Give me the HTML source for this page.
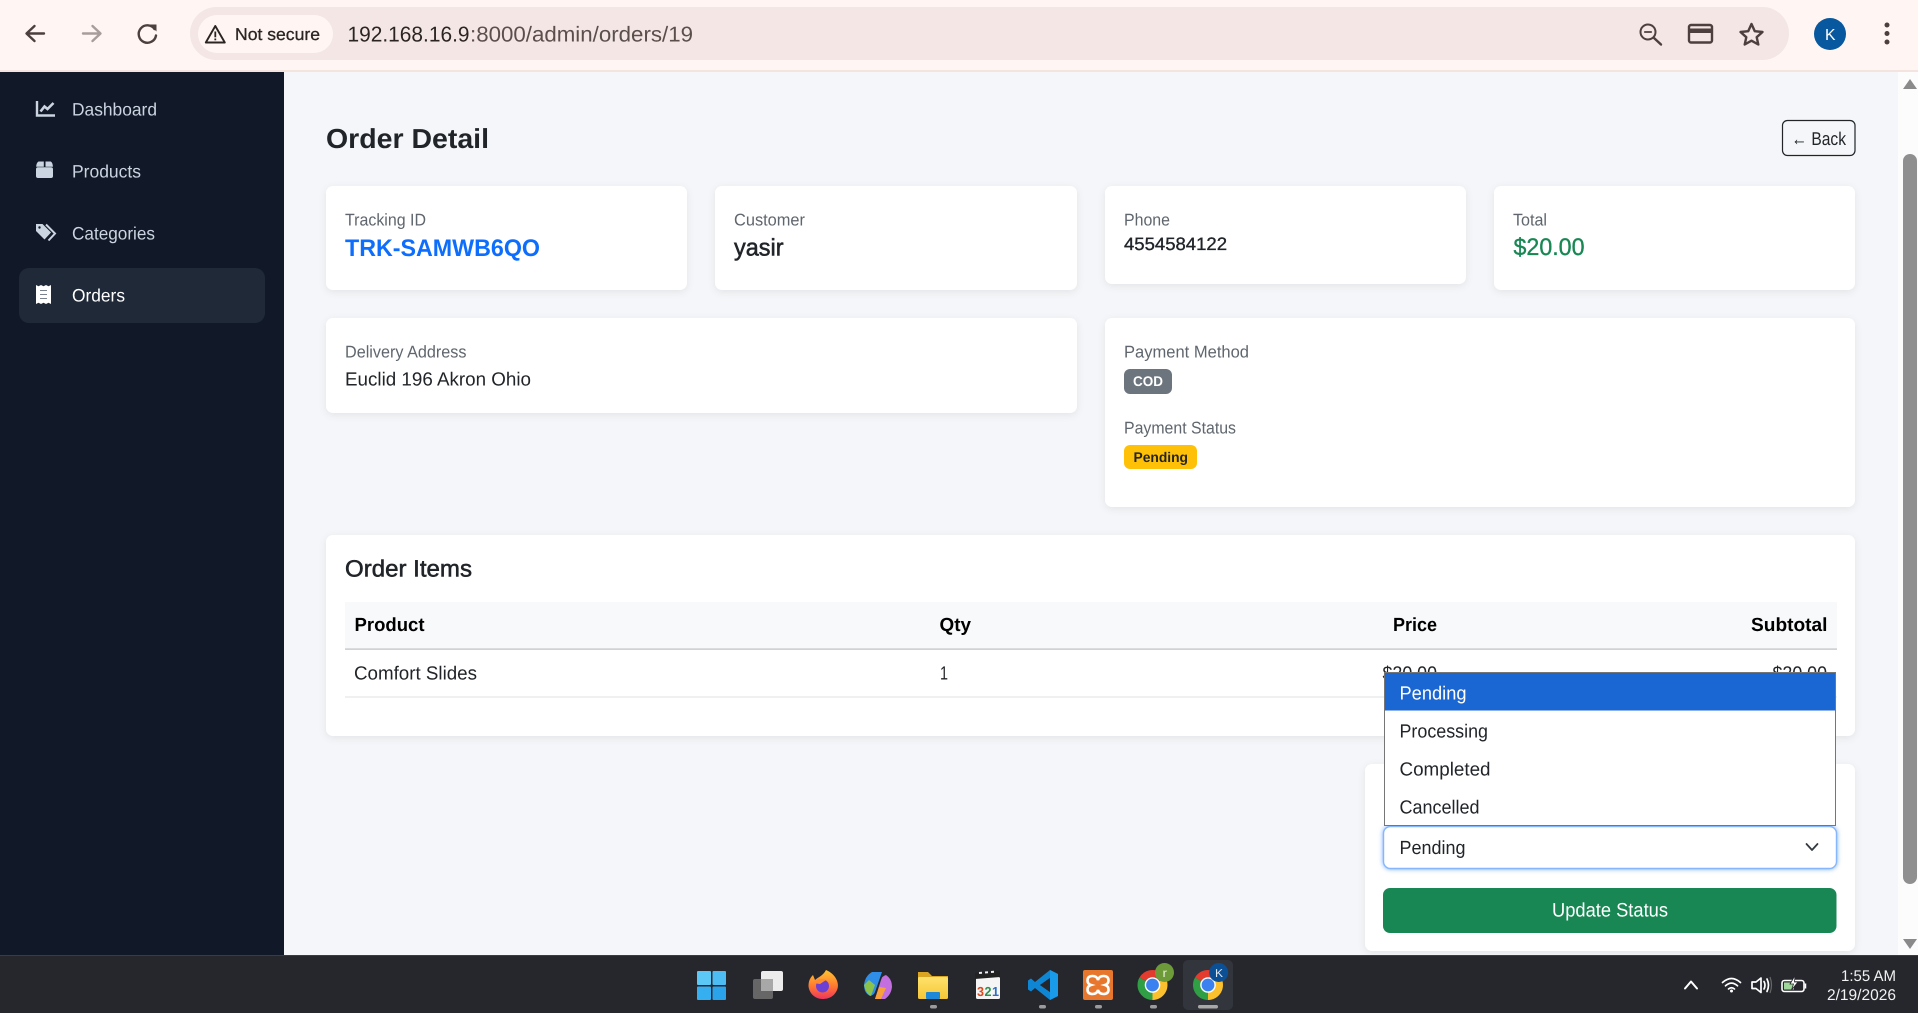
<!DOCTYPE html>
<html lang="en">
<head>
<meta charset="utf-8">
<title>Order Detail</title>
<style>
html,body{margin:0;padding:0;width:1918px;height:1013px;overflow:hidden;background:#f4f6f9}
svg{display:block;position:absolute;left:0;top:0}
text{font-family:"Liberation Sans",Arial,sans-serif;fill:#212529;text-rendering:geometricPrecision}
.lb{font-size:17px;fill:#5f666d}
.m{stroke:currentColor;stroke-width:.55px}
.b{font-weight:700}
.card{fill:#fff;filter:drop-shadow(0 2px 4px rgba(0,0,0,.07))}
.nav{font-size:18px;fill:#cbd5e1}
.opt{font-size:19px;fill:#212529}
.ic{fill:none;stroke:#4c3f3d;stroke-width:2.4;stroke-linecap:round;stroke-linejoin:round}
.tray{fill:none;stroke:#fff;stroke-width:1.7;stroke-linecap:round;stroke-linejoin:round}
</style>
</head>
<body>
<svg width="1918" height="1013" viewBox="0 0 1918 1013" xmlns="http://www.w3.org/2000/svg">
<defs>
  <g id="chrome">
    <path d="M0 0L-13 -7.5A15 15 0 0 1 13 -7.5Z" fill="#e33b2e"/>
    <path d="M0 0L13 -7.5A15 15 0 0 1 0 15Z" fill="#fbc02d"/>
    <path d="M0 0L0 15A15 15 0 0 1 -13 -7.5Z" fill="#2f9e44"/>
    <circle r="7.8" fill="#fff"/><circle r="6.4" fill="#3b82f0"/>
  </g>
  <linearGradient id="ff" x1="0" y1="0" x2="0" y2="1"><stop offset="0" stop-color="#ffc531"/><stop offset=".55" stop-color="#ff7a2f"/><stop offset="1" stop-color="#f0355f"/></linearGradient>
  <linearGradient id="fold" x1="0" y1="0" x2="0" y2="1"><stop offset="0" stop-color="#ffe26b"/><stop offset="1" stop-color="#f6c636"/></linearGradient>
</defs>

<!-- page background -->
<rect x="284" y="72" width="1614" height="883" fill="#f4f6f9"/>

<!-- browser toolbar -->
<rect width="1918" height="70" fill="#fff5f2"/>
<rect y="70" width="1918" height="2" fill="#f4e3df"/>
<path class="ic" d="M44 33.500H27M34.500 26L26.500 33.500L34.500 41"/>
<path class="ic" style="stroke:#a89d9a" d="M83 33.500H100M92.500 26L100.500 33.500L92.500 41"/>
<path class="ic" d="M154.500 29A8.700 8.700 0 1 0 156 35.500"/>
<path d="M149.500 24.500H156.500V31.500Z" fill="#4c3f3d"/>
<rect x="190" y="7" width="1599" height="53" rx="26.500" fill="#f3e6e4"/>
<rect x="198" y="15" width="135" height="38" rx="19" fill="#fff6f3"/>
<path d="M215.300 26L205.800 42.500H224.800Z" fill="none" stroke="#2a2523" stroke-width="1.900" stroke-linejoin="round"/>
<rect x="214.400" y="31.500" width="1.800" height="5.800" fill="#2a2523"/><rect x="214.400" y="38.500" width="1.800" height="1.800" fill="#2a2523"/>
<text x="235" y="40" font-size="17" class="m" textLength="85" lengthAdjust="spacingAndGlyphs" style="color:#2a2523;fill:#2a2523;stroke-width:.3px">Not secure</text>
<text x="347.500" y="41.500" font-size="21.500" textLength="122" lengthAdjust="spacingAndGlyphs" style="fill:#2b2422">192.168.16.9</text>
<text x="470" y="41.500" font-size="21.500" textLength="223" lengthAdjust="spacingAndGlyphs" style="fill:#5b4f4c">:8000/admin/orders/19</text>
<!-- right icons -->
<circle cx="1648" cy="32" r="7.500" class="ic" style="stroke-width:2"/><path class="ic" d="M1654 38L1661 44.500"/><path class="ic" style="stroke-width:1.800" d="M1644.800 32H1651.200"/>
<rect x="1689" y="25" width="23" height="17.500" rx="2" class="ic"/><rect x="1689" y="28.500" width="23" height="4.500" fill="#4c3f3d"/>
<path class="ic" d="M1751.500 24L1754.800 31.200L1762.500 32L1756.700 37.200L1758.300 44.500L1751.500 40.700L1744.700 44.500L1746.300 37.200L1740.500 32L1748.200 31.200Z"/>
<circle cx="1830" cy="34" r="16" fill="#07589f"/>
<text x="1825" y="40" font-size="16" style="fill:#fff" textLength="10.500" lengthAdjust="spacingAndGlyphs">K</text>
<circle cx="1887" cy="25" r="2.500" fill="#4c3f3d"/><circle cx="1887" cy="33.500" r="2.500" fill="#4c3f3d"/><circle cx="1887" cy="42" r="2.500" fill="#4c3f3d"/>

<!-- sidebar -->
<rect x="0" y="72" width="284" height="883" fill="#111827"/>
<path d="M37 101V115.500H55" fill="none" stroke="#cbd5e1" stroke-width="2.400"/>
<path d="M40.500 111.500L44.500 106.500L47.500 109L53.500 103" fill="none" stroke="#cbd5e1" stroke-width="2.600"/>
<text x="72" y="115.500" class="nav" textLength="85" lengthAdjust="spacingAndGlyphs">Dashboard</text>
<path d="M38.500 161.500H43.800V166.800H36.200Q36.200 163 38.500 161.500ZM45.500 161.500H50.800Q52.900 163 52.900 166.800H45.500Z" fill="#cbd5e1"/>
<rect x="36" y="167.300" width="17" height="10.700" rx="2" fill="#cbd5e1"/>
<text x="72" y="177.500" class="nav" textLength="69" lengthAdjust="spacingAndGlyphs">Products</text>
<path d="M36 224H42.500L51 232.500L44.500 239.500L36 231Z" fill="#cbd5e1"/>
<path d="M46 224.500L55 233.500L48.500 240.500" fill="none" stroke="#cbd5e1" stroke-width="2"/>
<circle cx="39.500" cy="227.500" r="1.200" fill="#111827"/>
<text x="72" y="239.500" class="nav" textLength="83" lengthAdjust="spacingAndGlyphs">Categories</text>
<rect x="19" y="268" width="246" height="55" rx="10" fill="#1f2937"/>
<path d="M36 285L38.500 286.200L41 285L43.500 286.200L46 285L48.500 286.200L51 285V304L48.500 302.800L46 304L43.500 302.800L41 304L38.500 302.800L36 304Z" fill="#fff"/>
<path d="M40 290.500H47M40 294.500H47M40 298.500H47" stroke="#7a828e" stroke-width="1"/>
<text x="72" y="301.500" class="nav" style="fill:#fff" textLength="53" lengthAdjust="spacingAndGlyphs">Orders</text>

<!-- header -->
<text x="326" y="148" font-size="27.500" class="b" textLength="163" lengthAdjust="spacingAndGlyphs">Order Detail</text>
<rect x="1782.500" y="120.500" width="72.500" height="35" rx="5" fill="none" stroke="#212529" stroke-width="1.200"/>
<text x="1791.500" y="145" font-size="18.500" textLength="54.500" lengthAdjust="spacingAndGlyphs">← Back</text>

<!-- info cards -->
<rect class="card" x="326" y="186" width="361" height="104" rx="7"/>
<rect class="card" x="715" y="186" width="362" height="104" rx="7"/>
<rect class="card" x="1105" y="186" width="361" height="98" rx="7"/>
<rect class="card" x="1494" y="186" width="361" height="104" rx="7"/>
<text x="345" y="225.500" class="lb" textLength="81" lengthAdjust="spacingAndGlyphs">Tracking ID</text>
<text x="345" y="256" font-size="24" class="b" style="fill:#0d6efd" textLength="195" lengthAdjust="spacingAndGlyphs">TRK-SAMWB6QO</text>
<text x="734" y="225.500" class="lb" textLength="71" lengthAdjust="spacingAndGlyphs">Customer</text>
<text x="734" y="255.500" font-size="24" class="m" style="color:#212529" textLength="49.500" lengthAdjust="spacingAndGlyphs">yasir</text>
<text x="1124" y="225.500" class="lb" textLength="46" lengthAdjust="spacingAndGlyphs">Phone</text>
<text x="1124" y="250" font-size="18" class="m" style="color:#212529;stroke-width:.35px" textLength="103" lengthAdjust="spacingAndGlyphs">4554584122</text>
<text x="1513" y="225.500" class="lb" textLength="34" lengthAdjust="spacingAndGlyphs">Total</text>
<text x="1513.500" y="255" font-size="24" class="m" style="color:#198754;fill:#198754;stroke-width:.35px" textLength="71" lengthAdjust="spacingAndGlyphs">$20.00</text>

<rect class="card" x="326" y="318" width="751" height="95" rx="7"/>
<text x="345" y="357.500" class="lb" textLength="121.500" lengthAdjust="spacingAndGlyphs">Delivery Address</text>
<text x="345" y="385.500" font-size="19" textLength="186" lengthAdjust="spacingAndGlyphs">Euclid 196 Akron Ohio</text>

<rect class="card" x="1105" y="318" width="750" height="189" rx="7"/>
<text x="1124" y="357.500" class="lb" textLength="125" lengthAdjust="spacingAndGlyphs">Payment Method</text>
<rect x="1124" y="369" width="48" height="25" rx="6" fill="#6c757d"/>
<text x="1133" y="386" font-size="14" class="b" style="fill:#fff" textLength="30" lengthAdjust="spacingAndGlyphs">COD</text>
<text x="1124" y="433.500" class="lb" textLength="112" lengthAdjust="spacingAndGlyphs">Payment Status</text>
<rect x="1124" y="445" width="73" height="24" rx="6" fill="#ffc107"/>
<text x="1133.500" y="462" font-size="14" class="b" textLength="54.500" lengthAdjust="spacingAndGlyphs">Pending</text>

<!-- order items -->
<rect class="card" x="326" y="535" width="1529" height="201" rx="7"/>
<text x="345" y="576.500" font-size="23.500" class="m" style="color:#212529" textLength="127" lengthAdjust="spacingAndGlyphs">Order Items</text>
<rect x="345" y="602" width="1492" height="47" fill="#f8f9fa"/>
<rect x="345" y="648.500" width="1492" height="1.200" fill="#bcbfc2"/>
<text x="354.500" y="631" font-size="19" class="b" style="fill:#000" textLength="70" lengthAdjust="spacingAndGlyphs">Product</text>
<text x="939.500" y="631" font-size="19" class="b" style="fill:#000" textLength="31.500" lengthAdjust="spacingAndGlyphs">Qty</text>
<text x="1393" y="631" font-size="19" class="b" style="fill:#000" textLength="44" lengthAdjust="spacingAndGlyphs">Price</text>
<text x="1751" y="631" font-size="19" class="b" style="fill:#000" textLength="76.500" lengthAdjust="spacingAndGlyphs">Subtotal</text>
<text x="354" y="679.500" font-size="19" textLength="123" lengthAdjust="spacingAndGlyphs">Comfort Slides</text>
<text x="940" y="679.500" font-size="19" textLength="8" lengthAdjust="spacingAndGlyphs">1</text>
<text x="1382.500" y="679.500" font-size="19" textLength="54.500" lengthAdjust="spacingAndGlyphs">$20.00</text>
<text x="1772.500" y="679.500" font-size="19" textLength="54.500" lengthAdjust="spacingAndGlyphs">$20.00</text>
<rect x="345" y="696.500" width="1492" height="1" fill="#dee2e6"/>

<!-- status card -->
<rect class="card" x="1365" y="764" width="490" height="187" rx="7"/>
<rect x="1383.500" y="826.500" width="453" height="42" rx="7" fill="#fff" stroke="#86b7fe" stroke-width="1.400" style="filter:drop-shadow(0 0 2.500px rgba(13,110,253,.55))"/>
<text x="1399.500" y="854" class="opt" textLength="66" lengthAdjust="spacingAndGlyphs">Pending</text>
<path d="M1806.500 844L1812 850L1817.500 844" fill="none" stroke="#343a40" stroke-width="1.800" stroke-linecap="round" stroke-linejoin="round"/>
<rect x="1383" y="888" width="453.500" height="45" rx="7" fill="#198754"/>
<text x="1552" y="916.500" font-size="19.500" style="fill:#fff" textLength="116" lengthAdjust="spacingAndGlyphs">Update Status</text>

<!-- open select list -->
<rect x="1384.500" y="672.500" width="451" height="153" fill="#fff" stroke="#767676"/>
<rect x="1385" y="673" width="450" height="37.500" fill="#1a66d2"/>
<text x="1399.500" y="699.500" class="opt" style="fill:#fff" textLength="67" lengthAdjust="spacingAndGlyphs">Pending</text>
<text x="1399.500" y="737.500" class="opt" textLength="88.500" lengthAdjust="spacingAndGlyphs">Processing</text>
<text x="1399.500" y="775.500" class="opt" textLength="91" lengthAdjust="spacingAndGlyphs">Completed</text>
<text x="1399.500" y="813.500" class="opt" textLength="80" lengthAdjust="spacingAndGlyphs">Cancelled</text>

<!-- scrollbar -->
<rect x="1898" y="72" width="20" height="883" fill="#fcfcfc"/>
<path d="M1910 79L1917 89H1903Z" fill="#8a8a8a"/>
<rect x="1903" y="154" width="14" height="730" rx="7" fill="#8f8f8f"/>
<path d="M1903 939H1917L1910 949Z" fill="#8a8a8a"/>

<!-- taskbar -->
<rect y="955" width="1918" height="58" fill="#25272d"/>
<rect y="955" width="1918" height="1" fill="#3a3c42"/>
<!-- windows -->
<rect x="697" y="971" width="14" height="14" rx="1" fill="#5cc8f5"/><rect x="712.500" y="971" width="13.500" height="14" rx="1" fill="#4cbcf2"/>
<rect x="697" y="986.500" width="14" height="13.500" rx="1" fill="#36aff0"/><rect x="712.500" y="986.500" width="13.500" height="13.500" rx="1" fill="#2aa3ea"/>
<!-- task view -->
<rect x="753" y="979" width="20" height="20" rx="2" fill="#666"/>
<rect x="761" y="971" width="22" height="20" rx="2" fill="#ececec"/>
<rect x="761" y="979" width="12" height="12" fill="#a8a8a8"/>
<!-- firefox -->
<path d="M826 970C836 974 840 984 837 990C834 997 828 999 822.500 999C815 999 809 993 808.500 986C808.500 981 810 978 813 975L815 980C818 977 823 976 826 970Z" fill="url(#ff)"/>
<circle cx="822.500" cy="986" r="6.500" fill="#6e3fd3"/>
<path d="M813 983Q819 977 826 980L820 984Z" fill="#ff8a2f"/>
<!-- copilot -->
<path d="M872 972H882L875 992Q874 995 870 996Q864 993 864 985Q865 976 872 972Z" fill="#2f8fe8"/>
<path d="M864 985Q866 994 871 996L875 985L869 980Z" fill="#8bc34a"/>
<path d="M885 999H875L881 980Q882 976 886 975Q892 979 892 987Q891 995 885 999Z" fill="#c46fe0"/>
<path d="M875 999H881L886 988L879 987Z" fill="#f9a23b"/>
<!-- explorer -->
<path d="M918 972H928L932 976H948V982H918Z" fill="#dba522"/>
<rect x="918" y="977" width="30" height="22" rx="1.500" fill="url(#fold)"/>
<rect x="926" y="992" width="14" height="7" rx="1" fill="#1e88d8"/>
<!-- mpc -->
<rect x="976" y="977" width="24" height="22" rx="1.500" fill="#f5f5f5"/>
<path d="M975 973L1000 971V977L975 979Z" fill="#222"/>
<path d="M979 973L982 972.800M985 972.500L988 972.300M991 972L994 971.800" stroke="#eee" stroke-width="2"/>
<text x="977" y="996" font-size="13" class="b" style="fill:#d84a1f" textLength="7" lengthAdjust="spacingAndGlyphs">3</text>
<text x="984.500" y="996" font-size="13" class="b" style="fill:#2f8f4e" textLength="7" lengthAdjust="spacingAndGlyphs">2</text>
<text x="992" y="996" font-size="13" class="b" style="fill:#2c6fc4" textLength="7" lengthAdjust="spacingAndGlyphs">1</text>
<!-- vscode -->
<path d="M1050 970L1058 974V996L1050 1000L1035 988L1031 991.500L1028 989.500V980.500L1031 978.500L1035 982ZM1050 978L1040 985L1050 992Z" fill="#0f86d4" fill-rule="evenodd"/>
<path d="M1050 970L1058 974V996L1050 1000Z" fill="#1a9bea"/>
<path d="M1050 978L1040 985L1050 992Z" fill="#25272d"/>
<!-- xampp -->
<rect x="1083" y="970" width="30" height="30" rx="2" fill="#e8772e"/>
<path d="M1092.500 976Q1097 976 1098 980Q1099 976 1103.500 976Q1108.500 976 1108.500 980.500Q1108.500 984 1105 985Q1108.500 986 1108.500 989.500Q1108.500 994 1103.500 994Q1099 994 1098 990Q1097 994 1092.500 994Q1087.500 994 1087.500 989.500Q1087.500 986 1091 985Q1087.500 984 1087.500 980.500Q1087.500 976 1092.500 976Z" fill="none" stroke="#fff" stroke-width="2.600"/>
<!-- chrome r -->
<use href="#chrome" transform="translate(1152.500 985)"/>
<circle cx="1164.500" cy="972.500" r="9.500" fill="#6d9b3a"/>
<text x="1162.500" y="977" font-size="12" style="fill:#e8f0d8" textLength="4.500" lengthAdjust="spacingAndGlyphs">r</text>
<!-- chrome K active -->
<rect x="1183" y="960" width="50" height="50" rx="5" fill="#33353c"/>
<use href="#chrome" transform="translate(1208 985)"/>
<circle cx="1218.700" cy="972.500" r="9.500" fill="#0b4f94"/>
<text x="1215" y="977" font-size="11.500" style="fill:#dfe9f5" textLength="8" lengthAdjust="spacingAndGlyphs">K</text>
<!-- indicators -->
<rect x="930" y="1005" width="7" height="3.500" rx="1.700" fill="#9b9b9b"/>
<rect x="1039" y="1005" width="7" height="3.500" rx="1.700" fill="#9b9b9b"/>
<rect x="1095" y="1005" width="7" height="3.500" rx="1.700" fill="#9b9b9b"/>
<rect x="1150" y="1005" width="7" height="3.500" rx="1.700" fill="#9b9b9b"/>
<rect x="1198" y="1005" width="20" height="3.500" rx="1.700" fill="#a8a8a8"/>
<!-- tray -->
<path class="tray" style="stroke-width:2" d="M1685 988.500L1691 981.500L1697 988.500"/>
<path class="tray" d="M1722.500 982.500Q1731.500 974.500 1740.500 982.500M1725.500 985.800Q1731.500 980.500 1737.500 985.800M1728.500 989Q1731.500 986.500 1734.500 989"/>
<circle cx="1731.500" cy="991" r="1.500" fill="#fff"/>
<path class="tray" d="M1752 982H1756L1761 978V992.500L1756 988.500H1752Z"/>
<path class="tray" d="M1764 981.500Q1766 985 1764 989M1767 979Q1770 985 1767 991.500"/>
<path d="M1770 977Q1773 985 1770 993" fill="none" stroke="#666" stroke-width="1.200"/>
<rect x="1782" y="980.500" width="22" height="11" rx="2.500" fill="none" stroke="#fff" stroke-width="1.600"/>
<rect x="1784" y="982.500" width="10" height="7" fill="#9fd69a"/>
<path d="M1805.500 983.500V988.500" stroke="#fff" stroke-width="1.500"/>
<path d="M1795 975.500L1790 984H1793.500L1791.500 990L1798 982H1794.500Z" fill="#fff" stroke="#25272d" stroke-width=".8"/>
<text x="1841" y="981" font-size="15.500" style="fill:#f2f2f2" textLength="55" lengthAdjust="spacingAndGlyphs">1:55 AM</text>
<text x="1827" y="1000" font-size="15.500" style="fill:#f2f2f2" textLength="69" lengthAdjust="spacingAndGlyphs">2/19/2026</text>
</svg>
</body>
</html>
